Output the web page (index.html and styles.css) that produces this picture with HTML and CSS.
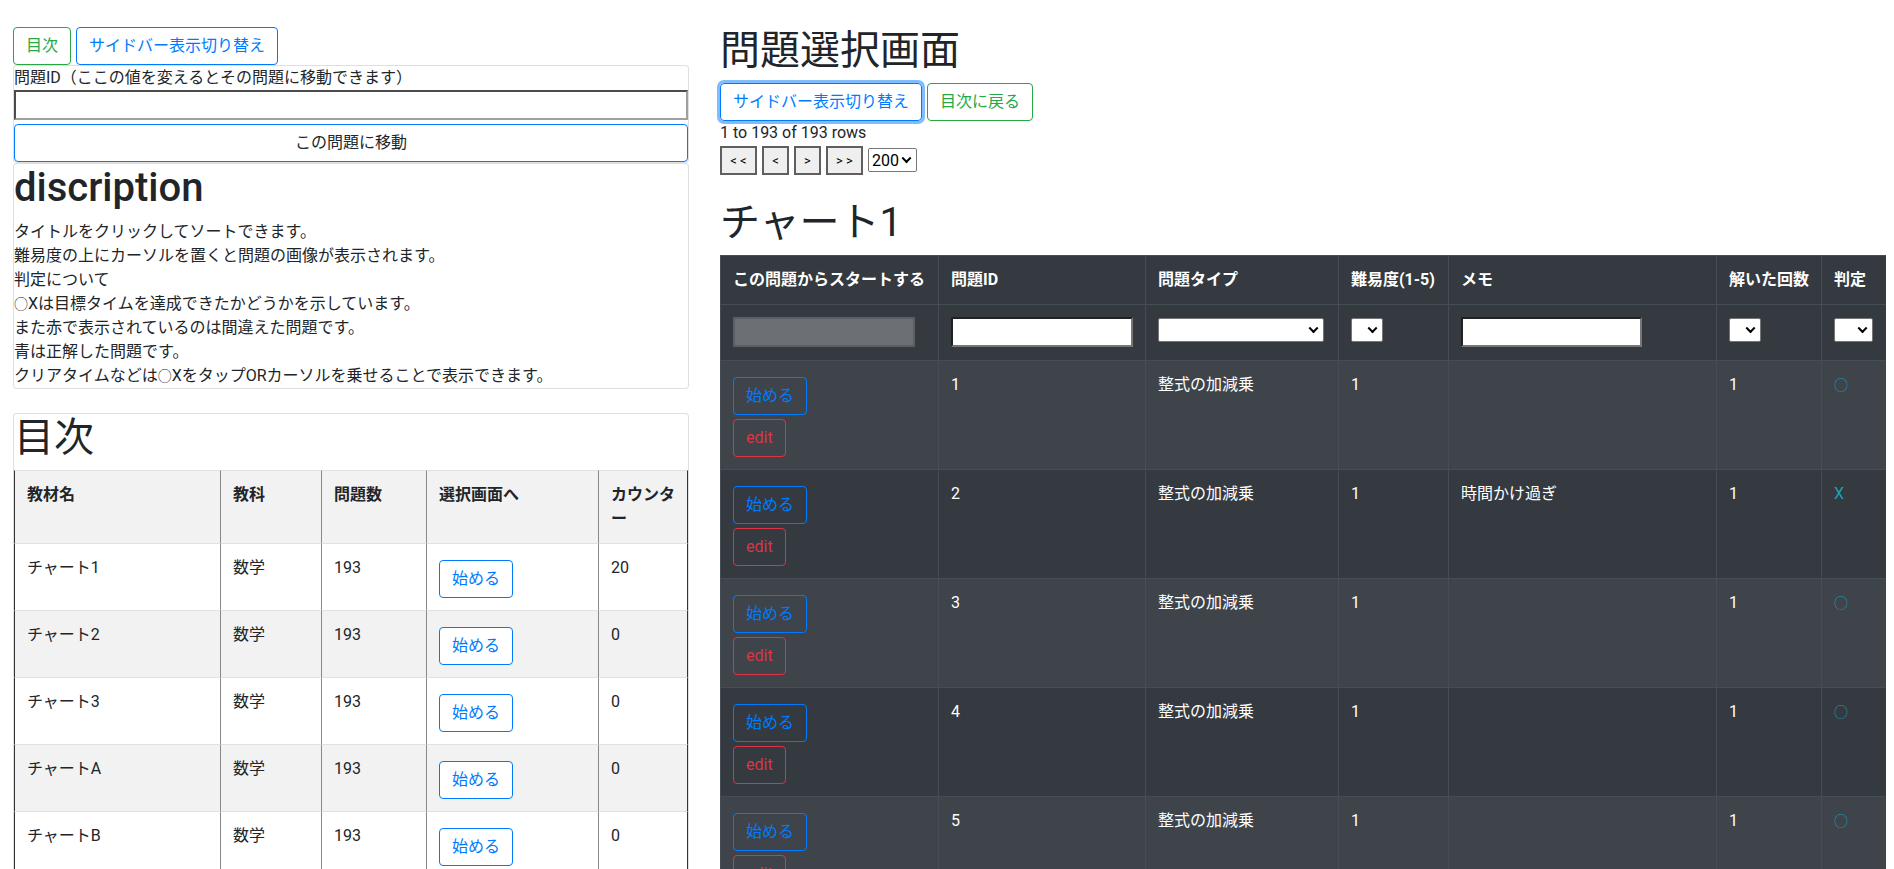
FILE: index.html
```html
<!doctype html>
<html lang="ja">
  <head>
    <meta charset="UTF-8" />
    <title>問題選択画面</title>
    <link rel="stylesheet" href="styles.css">
  </head>
  <body>
    <div class="layout">
      <aside class="sidebar">
        <div class="btn-row">
          <a class="btn btn-outline-success" href="#toc">目次</a>
          <button class="btn btn-outline-primary">サイドバー表示切り替え</button>
        </div>

        <div class="card">
          <label class="jump-label" for="jump-id">問題ID（ここの値を変えるとその問題に移動できます）</label>
          <input class="jump-input" id="jump-id" type="text">
          <button class="btn btn-jump">この問題に移動</button>
        </div>

        <div class="card">
          <h1 class="desc-title">discription</h1>
          <p class="desc">
            タイトルをクリックしてソートできます。<br>
            難易度の上にカーソルを置くと問題の画像が表示されます。<br>
            判定について<br>
            <span class="mark">○</span>Xは目標タイムを達成できたかどうかを示しています。<br>
            また赤で表示されているのは間違えた問題です。<br>
            青は正解した問題です。<br>
            クリアタイムなどは<span class="mark">○</span>XをタップORカーソルを乗せることで表示できます。
          </p>
        </div>

        <div class="card toc-card" id="toc">
          <h1>目次</h1>
          <table class="toc">
            <thead>
              <tr>
                <th class="toc-name">教材名</th>
                <th class="toc-subject">教科</th>
                <th class="toc-count">問題数</th>
                <th class="toc-go">選択画面へ</th>
                <th>カウンター</th>
              </tr>
            </thead>
            <tbody>
              <tr>
                <td>チャート1</td><td>数学</td><td>193</td>
                <td><button class="btn btn-outline-primary btn-cell">始める</button></td>
                <td>20</td>
              </tr>
              <tr>
                <td>チャート2</td><td>数学</td><td>193</td>
                <td><button class="btn btn-outline-primary btn-cell">始める</button></td>
                <td>0</td>
              </tr>
              <tr>
                <td>チャート3</td><td>数学</td><td>193</td>
                <td><button class="btn btn-outline-primary btn-cell">始める</button></td>
                <td>0</td>
              </tr>
              <tr>
                <td>チャートA</td><td>数学</td><td>193</td>
                <td><button class="btn btn-outline-primary btn-cell">始める</button></td>
                <td>0</td>
              </tr>
              <tr>
                <td>チャートB</td><td>数学</td><td>193</td>
                <td><button class="btn btn-outline-primary btn-cell">始める</button></td>
                <td>0</td>
              </tr>
            </tbody>
          </table>
        </div>
      </aside>

      <main class="main">
        <h1>問題選択画面</h1>
        <div class="btn-row">
          <button class="btn btn-outline-primary btn-focus">サイドバー表示切り替え</button>
          <a class="btn btn-outline-success" href="#toc">目次に戻る</a>
        </div>
        <div class="rows-info">1 to 193 of 193 rows</div>
        <div class="pager">
          <button class="pager-btn pager-wide">&lt; &lt;</button>
          <button class="pager-btn">&lt;</button>
          <button class="pager-btn">&gt;</button>
          <button class="pager-btn pager-wide">&gt; &gt;</button>
          <span class="select-wrap">
            <select class="pager-size">
              <option>200</option>
            </select>
          </span>
        </div>

        <h1 class="chart-title">チャート1</h1>
        <table class="problems">
          <thead>
            <tr>
              <th class="col-start">この問題からスタートする</th>
              <th class="col-id">問題ID</th>
              <th class="col-type">問題タイプ</th>
              <th class="col-level">難易度(1-5)</th>
              <th class="col-memo">メモ</th>
              <th class="col-solved">解いた回数</th>
              <th class="col-judge">判定</th>
            </tr>
            <tr class="filters">
              <th><input class="filter-disabled" type="text" disabled></th>
              <th><input class="filter-text" type="text"></th>
              <th><span class="select-wrap"><select class="filter-select select-type"><option></option></select></span></th>
              <th><span class="select-wrap"><select class="filter-select select-small"><option></option></select></span></th>
              <th><input class="filter-text filter-memo" type="text"></th>
              <th><span class="select-wrap"><select class="filter-select select-small"><option></option></select></span></th>
              <th><span class="select-wrap"><select class="filter-select select-judge"><option></option></select></span></th>
            </tr>
          </thead>
          <tbody>
            <tr>
              <td><div class="actions"><button class="btn btn-outline-primary">始める</button><button class="btn btn-outline-danger">edit</button></div></td>
              <td>1</td><td>整式の加減乗</td><td>1</td><td></td><td>1</td>
              <td><span class="judge mark">○</span></td>
            </tr>
            <tr>
              <td><div class="actions"><button class="btn btn-outline-primary">始める</button><button class="btn btn-outline-danger">edit</button></div></td>
              <td>2</td><td>整式の加減乗</td><td>1</td><td>時間かけ過ぎ</td><td>1</td>
              <td><span class="judge">X</span></td>
            </tr>
            <tr>
              <td><div class="actions"><button class="btn btn-outline-primary">始める</button><button class="btn btn-outline-danger">edit</button></div></td>
              <td>3</td><td>整式の加減乗</td><td>1</td><td></td><td>1</td>
              <td><span class="judge mark">○</span></td>
            </tr>
            <tr>
              <td><div class="actions"><button class="btn btn-outline-primary">始める</button><button class="btn btn-outline-danger">edit</button></div></td>
              <td>4</td><td>整式の加減乗</td><td>1</td><td></td><td>1</td>
              <td><span class="judge mark">○</span></td>
            </tr>
            <tr>
              <td><div class="actions"><button class="btn btn-outline-primary">始める</button><button class="btn btn-outline-danger">edit</button></div></td>
              <td>5</td><td>整式の加減乗</td><td>1</td><td></td><td>1</td>
              <td><span class="judge mark">○</span></td>
            </tr>
          </tbody>
        </table>
      </main>
    </div>
  </body>
</html>
```

FILE: styles.css
```css
* {
  box-sizing: border-box;
}

body {
  margin: 0;
  font-family: Roboto, "Noto Sans CJK JP", sans-serif;
  font-size: 16px;
  line-height: 1.5;
  color: #212529;
  background: #fff;
}

h1 {
  margin: 0 0 8px;
  font-size: 40px;
  line-height: 1.2;
  font-weight: 400;
}

.desc-title {
  font-weight: 500;
}

.layout {
  display: grid;
  grid-template-columns: 676px 1166px;
  column-gap: 31px;
  align-items: start;
  padding: 27px 8px 0 13px;
}

/* buttons */
.btn {
  display: inline-block;
  padding: 6px 12px;
  font-family: inherit;
  font-size: 16px;
  line-height: 24px;
  border: 1px solid transparent;
  border-radius: 4px;
  background: transparent;
  text-decoration: none;
  cursor: pointer;
}

.btn-outline-primary {
  color: #007bff;
  border-color: #007bff;
}

.btn-outline-success {
  color: #28a745;
  border-color: #28a745;
}

.btn-outline-danger {
  color: #dc3545;
  border-color: #dc3545;
}

.btn-focus {
  box-shadow: 0 0 0 3px rgba(0, 123, 255, 0.5);
}

.btn-row {
  display: flex;
  gap: 5px;
}

/* sidebar */
.card {
  border: 1px solid rgba(0, 0, 0, 0.125);
  border-radius: 4px;
  background: #fff;
}

.jump-label {
  display: block;
}

.jump-input {
  display: block;
  width: 100%;
  height: 30px;
  border: 2px inset #a0a0a0;
  font: inherit;
}

.btn-jump {
  display: block;
  width: 100%;
  margin-top: 4px;
  color: #212529;
  background: #fff;
  border-color: #007bff;
}

.desc {
  margin: 0;
}

/* ○ mark, kept about the size of the X beside it */
.mark {
  font-family: "Noto Sans CJK JP", sans-serif;
  font-size: 14px;
  font-weight: 300;
}

.toc-card {
  margin-top: 24px;
}

.toc {
  width: 100%;
  border-collapse: separate;
  border-spacing: 0;
  table-layout: fixed;
}

.toc th,
.toc td {
  padding: 12px;
  text-align: left;
  vertical-align: top;
  border-top: 1px solid #dee2e6;
  border-left: 1px solid #888;
}

.toc th:first-child,
.toc td:first-child {
  border-left-color: #333;
}

.toc th:last-child,
.toc td:last-child {
  border-right: 1px solid #333;
}

.toc thead th {
  background: #f2f2f2;
  font-weight: 700;
}

.toc tbody tr:nth-child(even) {
  background: #f2f2f2;
}

.toc-name {
  width: 206px;
}

.toc-subject {
  width: 101px;
}

.toc-count {
  width: 105px;
}

.toc-go {
  width: 172px;
}

.btn-cell {
  margin-top: 4px;
  background: #fff;
}

/* main */
.rows-info {
  line-height: 24px;
}

.pager {
  display: flex;
  align-items: center;
  gap: 5px;
  height: 30px;
}

.pager-btn {
  width: 27px;
  height: 29px;
  padding: 0;
  font-family: inherit;
  font-size: 13px;
  color: #000;
  background: #efefef;
  border: 2px solid #5f5f5f;
  border-radius: 0;
  white-space: nowrap;
}

.pager-wide {
  width: 37px;
}

/* native arrow replaced so the value is not clipped */
.select-wrap {
  position: relative;
  display: block;
}

.select-wrap::after {
  content: "";
  position: absolute;
  top: 50%;
  right: 7px;
  width: 5px;
  height: 5px;
  border-right: 2px solid #000;
  border-bottom: 2px solid #000;
  transform: translateY(-75%) rotate(45deg);
  pointer-events: none;
}

.pager-size {
  display: block;
  width: 49px;
  height: 24px;
  padding: 0 0 0 3px;
  font-family: inherit;
  font-size: 16px;
  color: #000;
  background: #fff;
  border: 1px solid #767676;
  border-radius: 2px;
  appearance: none;
}

.chart-title {
  margin-top: 24px;
}

.problems {
  width: 1166px;
  border-collapse: separate;
  border-spacing: 0;
  table-layout: fixed;
  color: #fff;
  background: #343a40;
}

.problems th,
.problems td {
  padding: 12px;
  text-align: left;
  vertical-align: top;
  border-top: 1px solid #454d55;
  border-left: 1px solid #454d55;
}

.problems thead th {
  font-weight: 700;
}

.problems tbody tr:nth-child(odd) {
  background: #3e444a;
}

.filters th {
  padding-bottom: 13px;
}

.filters .select-wrap {
  display: inline-block;
}

.col-start {
  width: 218px;
}

.col-id {
  width: 207px;
}

.col-type {
  width: 193px;
}

.col-level {
  width: 110px;
}

.col-memo {
  width: 268px;
}

.col-solved {
  width: 105px;
}

.filter-disabled,
.filter-text {
  display: block;
  width: 182px;
  height: 30px;
  font: inherit;
}

.filter-disabled {
  background: #6c7074;
  border: 2px solid #5b5f63;
}

.filter-text {
  background: #fff;
  border: 2px inset #767676;
}

.filter-memo {
  width: 181px;
}

.filter-select {
  display: block;
  height: 24px;
  font-size: 13px;
  background: #fff;
  border: 1px solid #767676;
  border-radius: 2px;
  appearance: none;
}

.select-type {
  width: 166px;
}

.select-small {
  width: 32px;
}

.select-judge {
  width: 39px;
}

.actions {
  display: flex;
  flex-direction: column;
  align-items: flex-start;
  gap: 4px;
  padding-top: 4px;
}

.judge {
  color: #17a2b8;
}
```
